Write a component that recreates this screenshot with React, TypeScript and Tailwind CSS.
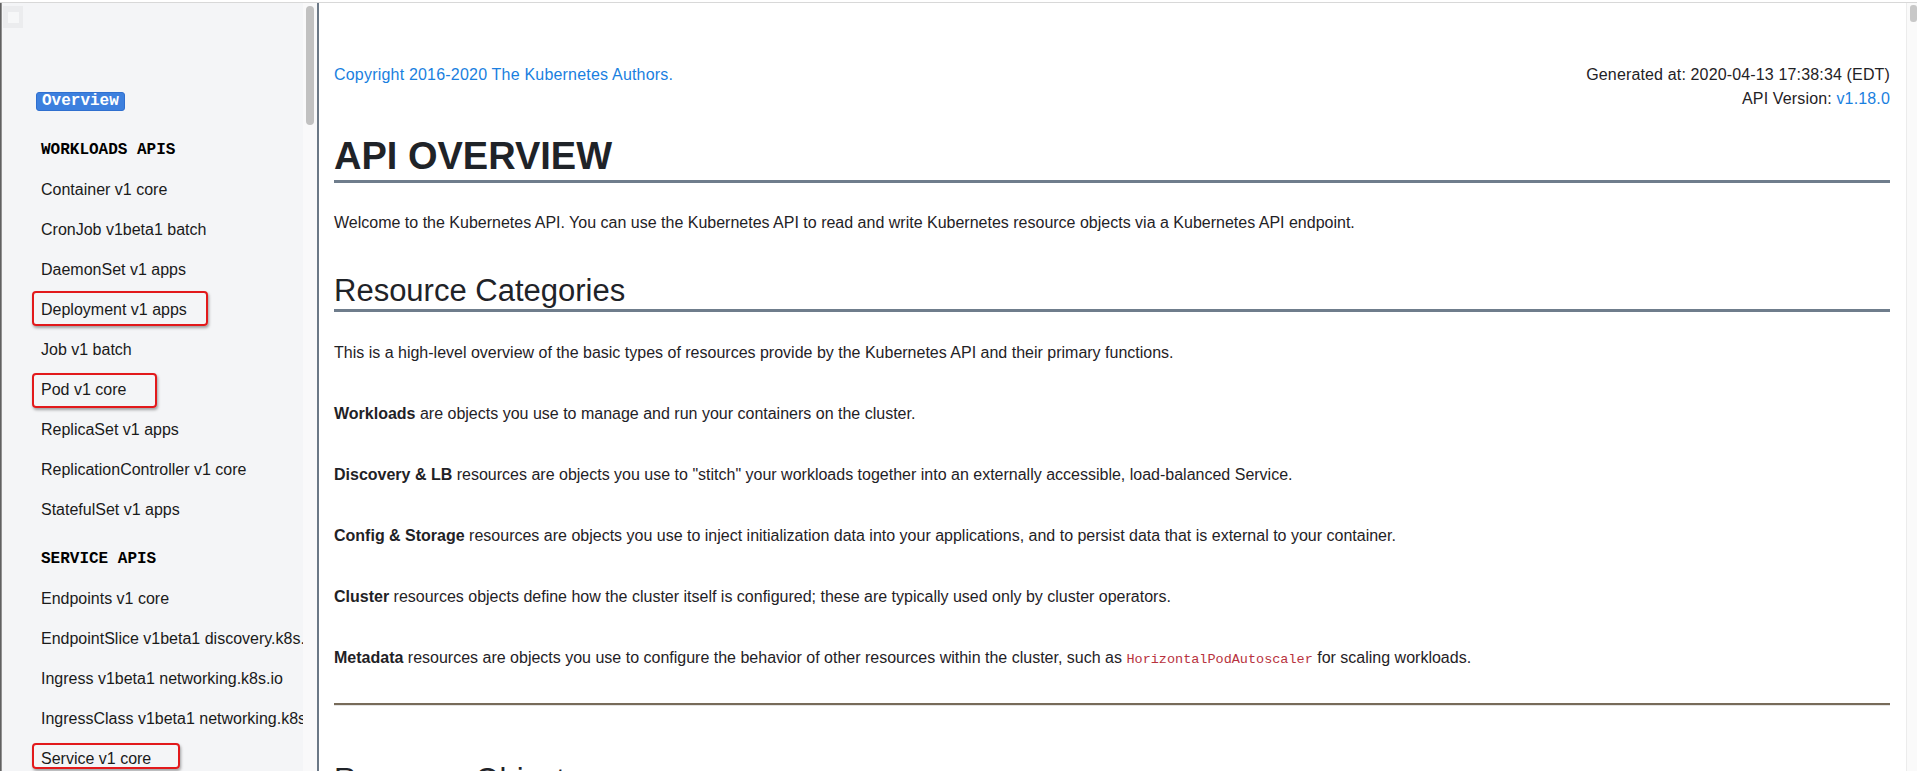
import React from 'react';

type NavItem = { label: string; mark?: { top: number; h: number; w: number } };
type NavSection = { title: string; items: NavItem[] };

const sections: NavSection[] = [
  {
    title: 'WORKLOADS APIS',
    items: [
      { label: 'Container v1 core' },
      { label: 'CronJob v1beta1 batch' },
      { label: 'DaemonSet v1 apps' },
      { label: 'Deployment v1 apps', mark: { top: 1, h: 35, w: 176 } },
      { label: 'Job v1 batch' },
      { label: 'Pod v1 core', mark: { top: 3, h: 35, w: 125 } },
      { label: 'ReplicaSet v1 apps' },
      { label: 'ReplicationController v1 core' },
      { label: 'StatefulSet v1 apps' },
    ],
  },
  {
    title: 'SERVICE APIS',
    items: [
      { label: 'Endpoints v1 core' },
      { label: 'EndpointSlice v1beta1 discovery.k8s.io' },
      { label: 'Ingress v1beta1 networking.k8s.io' },
      { label: 'IngressClass v1beta1 networking.k8s.io' },
      { label: 'Service v1 core', mark: { top: 4, h: 26, w: 148 } },
      { label: 'ServiceAccount v1 core' },
    ],
  },
];

const categories: { term: string; rest: React.ReactNode }[] = [
  { term: 'Workloads', rest: ' are objects you use to manage and run your containers on the cluster.' },
  {
    term: 'Discovery & LB',
    rest: ' resources are objects you use to "stitch" your workloads together into an externally accessible, load-balanced Service.',
  },
  {
    term: 'Config & Storage',
    rest: ' resources are objects you use to inject initialization data into your applications, and to persist data that is external to your container.',
  },
  {
    term: 'Cluster',
    rest: ' resources objects define how the cluster itself is configured; these are typically used only by cluster operators.',
  },
  {
    term: 'Metadata',
    rest: (
      <>
        {' '}resources are objects you use to configure the behavior of other resources within the cluster, such as{' '}
        <code className="font-['Liberation_Mono',monospace] text-[13.5px] text-[#b8323e]">HorizontalPodAutoscaler</code>
        {' '}for scaling workloads.
      </>
    ),
  },
];

function Sidebar() {
  return (
    <aside className="w-[301px] shrink-0 overflow-hidden bg-[#f4f5f7]">
      {/* little toggle square */}
      <div className="ml-[1px] mt-[3px] flex h-[22px] w-[20px] items-center justify-center bg-[#ebecee]">
        <div className="h-[11px] w-[11px] bg-[#f6f7f8]" />
      </div>

      <div className="ml-[34px] mt-[60px]">
        <span className="inline-block h-[19px] rounded-[3px] border border-[#2f6fcf] bg-[#3d80de] px-[5px] font-['Liberation_Mono',monospace] text-[16px] font-bold leading-[17px] text-white">
          Overview
        </span>
      </div>

      <div className="mt-[18px] pl-[39px]">
        {sections.map((s, i) => (
          <div key={s.title} className={i > 0 ? 'mt-[9px]' : ''}>
            <div className="flex h-[40px] items-center font-['Liberation_Mono',monospace] text-[16px] font-bold text-black">
              {s.title}
            </div>
            {s.items.map((it) => (
              <div
                key={it.label}
                className="relative flex h-[40px] items-center whitespace-nowrap text-[16px] text-[#1a1a1a]"
              >
                {it.label}
                {it.mark && (
                  <div
                    className="pointer-events-none absolute left-[-9px] rounded-[4px] border-2 border-[#e2191b] shadow-[1px_2px_3px_rgba(0,0,0,0.35)]"
                    style={{ top: it.mark.top, height: it.mark.h, width: it.mark.w }}
                  />
                )}
              </div>
            ))}
          </div>
        ))}
      </div>
    </aside>
  );
}

export default function App() {
  return (
    <div className="flex h-[771px] w-full flex-col overflow-hidden bg-white font-['Liberation_Sans',Arial,sans-serif]">
      <div className="h-[3px] shrink-0 border-b border-[#d8d8d8] bg-white" />
      <div className="flex min-h-0 flex-1">
        <div className="w-[2px] shrink-0 bg-gradient-to-r from-[#4a4a4a] to-[#aaaaaa]" />
        <Sidebar />

        {/* sidebar scrollbar */}
        <div className="flex w-[14px] shrink-0 justify-center bg-[#f9f9fa] pt-[3px]">
          <div className="h-[119px] w-[8px] rounded-full bg-[#c1c1c1]" />
        </div>
        <div className="w-[2px] shrink-0 bg-[#6b7886]" />

        <main className="min-w-0 flex-1 px-[15px] pr-[16px] pt-[60px] text-[16px] leading-6 text-[#1f2226]">
          <div className="flex justify-between">
            <a className="tracking-[0.2px] text-[#1a7fe0]">Copyright 2016-2020 The Kubernetes Authors.</a>
            <div className="text-right tracking-[0.15px]">
              <div>Generated at: 2020-04-13 17:38:34 (EDT)</div>
              <div>
                API Version: <a className="text-[#1a7fe0]">v1.18.0</a>
              </div>
            </div>
          </div>

          <h1 className="mt-[23px] border-b-[3px] border-[#6f7d8c] text-[38px] font-bold leading-[1.2] text-[#1f2328]">
            API OVERVIEW
          </h1>

          <p className="mt-[28px]">
            Welcome to the Kubernetes API. You can use the Kubernetes API to read and write Kubernetes resource objects
            via a Kubernetes API endpoint.
          </p>

          <h2 className="mt-[37px] border-b-[3px] border-[#6f7d8c] text-[31px] leading-[1.2] text-[#1f2328]">
            Resource Categories
          </h2>

          <p className="mt-[29px]">
            This is a high-level overview of the basic types of resources provide by the Kubernetes API and their primary
            functions.
          </p>

          {categories.map((c) => (
            <p key={c.term} className="mt-[37px]">
              <b>{c.term}</b>
              {c.rest}
            </p>
          ))}

          <div className="mt-[31px] border-b border-[#e4e4e4]">
            <div className="h-[2px] bg-[#776b59]" />
          </div>

          <h2 className="mt-[55px] text-[31px] leading-[1.2] text-[#1f2328]">Resource Objects</h2>
        </main>

        {/* page scrollbar */}
        <div className="w-[11px] shrink-0 border-l border-[#ececec] bg-[#fafafa] pl-[3px] pt-[2px]">
          <div className="h-[17px] w-[7px] rounded-[3px] bg-[#c8c8c8]" />
        </div>
      </div>
    </div>
  );
}
